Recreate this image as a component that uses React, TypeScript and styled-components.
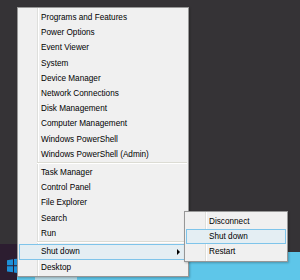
import React from "react";
import styled, { createGlobalStyle } from "styled-components";

const Global = createGlobalStyle`
  html, body { margin: 0; padding: 0; }
  body {
    width: 300px;
    height: 280px;
    overflow: hidden;
    font-family: "Liberation Sans", Arial, sans-serif;
  }
`;

const Desktop = styled.div`
  position: relative;
  width: 300px;
  height: 280px;
  display: flex;
  flex-direction: column;
  overflow: hidden;
  background: #353336;
`;

const Wallpaper = styled.div`
  flex: 1;
  background: #353336;
`;

const Taskbar = styled.div`
  height: 28px;
  background: #5ec6e9;
  display: flex;
  align-items: flex-end;
`;

const StartTip = styled.div`
  width: 17px;
  height: 36px;
  margin-top: -8px;
  align-self: flex-start;
  background: #2c1d30;
  overflow: hidden;
  box-sizing: border-box;
  padding: 14px 0 0 7px;
`;

const TaskButton = styled.div`
  margin-left: 18px;
  width: 42px;
  height: 100%;
  background: #b9dbe6;
`;

const Menu = styled.div<{ $left: number; $top: number; $width: number; $gutter: number; $padBottom: number }>`
  position: absolute;
  left: ${(p) => p.$left}px;
  top: ${(p) => p.$top}px;
  width: ${(p) => p.$width}px;
  box-sizing: border-box;
  border: 1px solid #979797;
  padding: 2px 1px ${(p) => p.$padBottom}px;
  background:
    linear-gradient(
      to right,
      transparent ${(p) => p.$gutter}px,
      #dedfdc ${(p) => p.$gutter}px,
      #dedfdc ${(p) => p.$gutter + 1}px,
      #ffffff ${(p) => p.$gutter + 1}px,
      #ffffff ${(p) => p.$gutter + 2}px,
      transparent ${(p) => p.$gutter + 2}px
    ),
    #f0f0f0;
  box-shadow: 1px 1px 2px rgba(0, 0, 0, 0.25);
  z-index: ${(p) => (p.$left > 100 ? 2 : 1)};
`;

const Item = styled.div<{ $active?: boolean; $indent: number; $tall?: boolean }>`
  height: ${(p) => (p.$tall ? 16 : 15.2)}px;
  box-sizing: border-box;
  display: flex;
  align-items: center;
  padding-left: ${(p) => p.$indent}px;
  border: 1px solid ${(p) => (p.$active ? "#7ec4ea" : "transparent")};
  background: ${(p) => (p.$active ? "#e4eef3" : "transparent")};
  font-size: 8.2px;
  color: #000;
  white-space: nowrap;
`;

const Label = styled.span`
  flex: 1;
`;

const Arrow = styled.span`
  width: 0;
  height: 0;
  margin-right: 6px;
  border-left: 3px solid #000;
  border-top: 3px solid transparent;
  border-bottom: 3px solid transparent;
`;

const Separator = styled.div<{ $indent: number }>`
  margin: 0 0 1px ${(p) => p.$indent}px;
  height: 0;
  border-top: 1px solid #dcdcd4;
  border-bottom: 1px solid #ffffff;
`;

const WinLogo = () => (
  <svg width="16" height="16" viewBox="0 0 16 16">
    <path d="M0 2.2 L6 1.3 V7.3 H0 Z" fill="#1d8fd8" />
    <path d="M7 1.1 L16 0 V7.3 H7 Z" fill="#1d8fd8" />
    <path d="M0 8.3 H6 V14.3 L0 13.5 Z" fill="#1d8fd8" />
    <path d="M7 8.3 H16 V16 L7 14.5 Z" fill="#1d8fd8" />
  </svg>
);

const group1 = [
  "Programs and Features",
  "Power Options",
  "Event Viewer",
  "System",
  "Device Manager",
  "Network Connections",
  "Disk Management",
  "Computer Management",
  "Windows PowerShell",
  "Windows PowerShell (Admin)",
];

const group2 = ["Task Manager", "Control Panel", "File Explorer", "Search", "Run"];

const subItems = ["Disconnect", "Shut down", "Restart"];

export default function App() {
  return (
    <>
      <Global />
      <Desktop>
        <Wallpaper />
        <Taskbar>
          <StartTip>
            <WinLogo />
          </StartTip>
          <TaskButton />
        </Taskbar>

        <Menu $left={17} $top={7} $width={172} $gutter={19} $padBottom={0}>
          {group1.map((t) => (
            <Item key={t} $indent={21}>
              <Label>{t}</Label>
            </Item>
          ))}
          <Separator $indent={18} />
          {group2.map((t) => (
            <Item key={t} $indent={21}>
              <Label>{t}</Label>
            </Item>
          ))}
          <Separator $indent={18} />
          <Item $active $tall $indent={21}>
            <Label>Shut down</Label>
            <Arrow />
          </Item>
          <Item $tall $indent={21}>
            <Label>Desktop</Label>
          </Item>
        </Menu>

        <Menu $left={184} $top={211} $width={104} $gutter={20} $padBottom={1}>
          {subItems.map((t) => (
            <Item key={t} $indent={22} $active={t === "Shut down"}>
              <Label>{t}</Label>
            </Item>
          ))}
        </Menu>
      </Desktop>
    </>
  );
}
